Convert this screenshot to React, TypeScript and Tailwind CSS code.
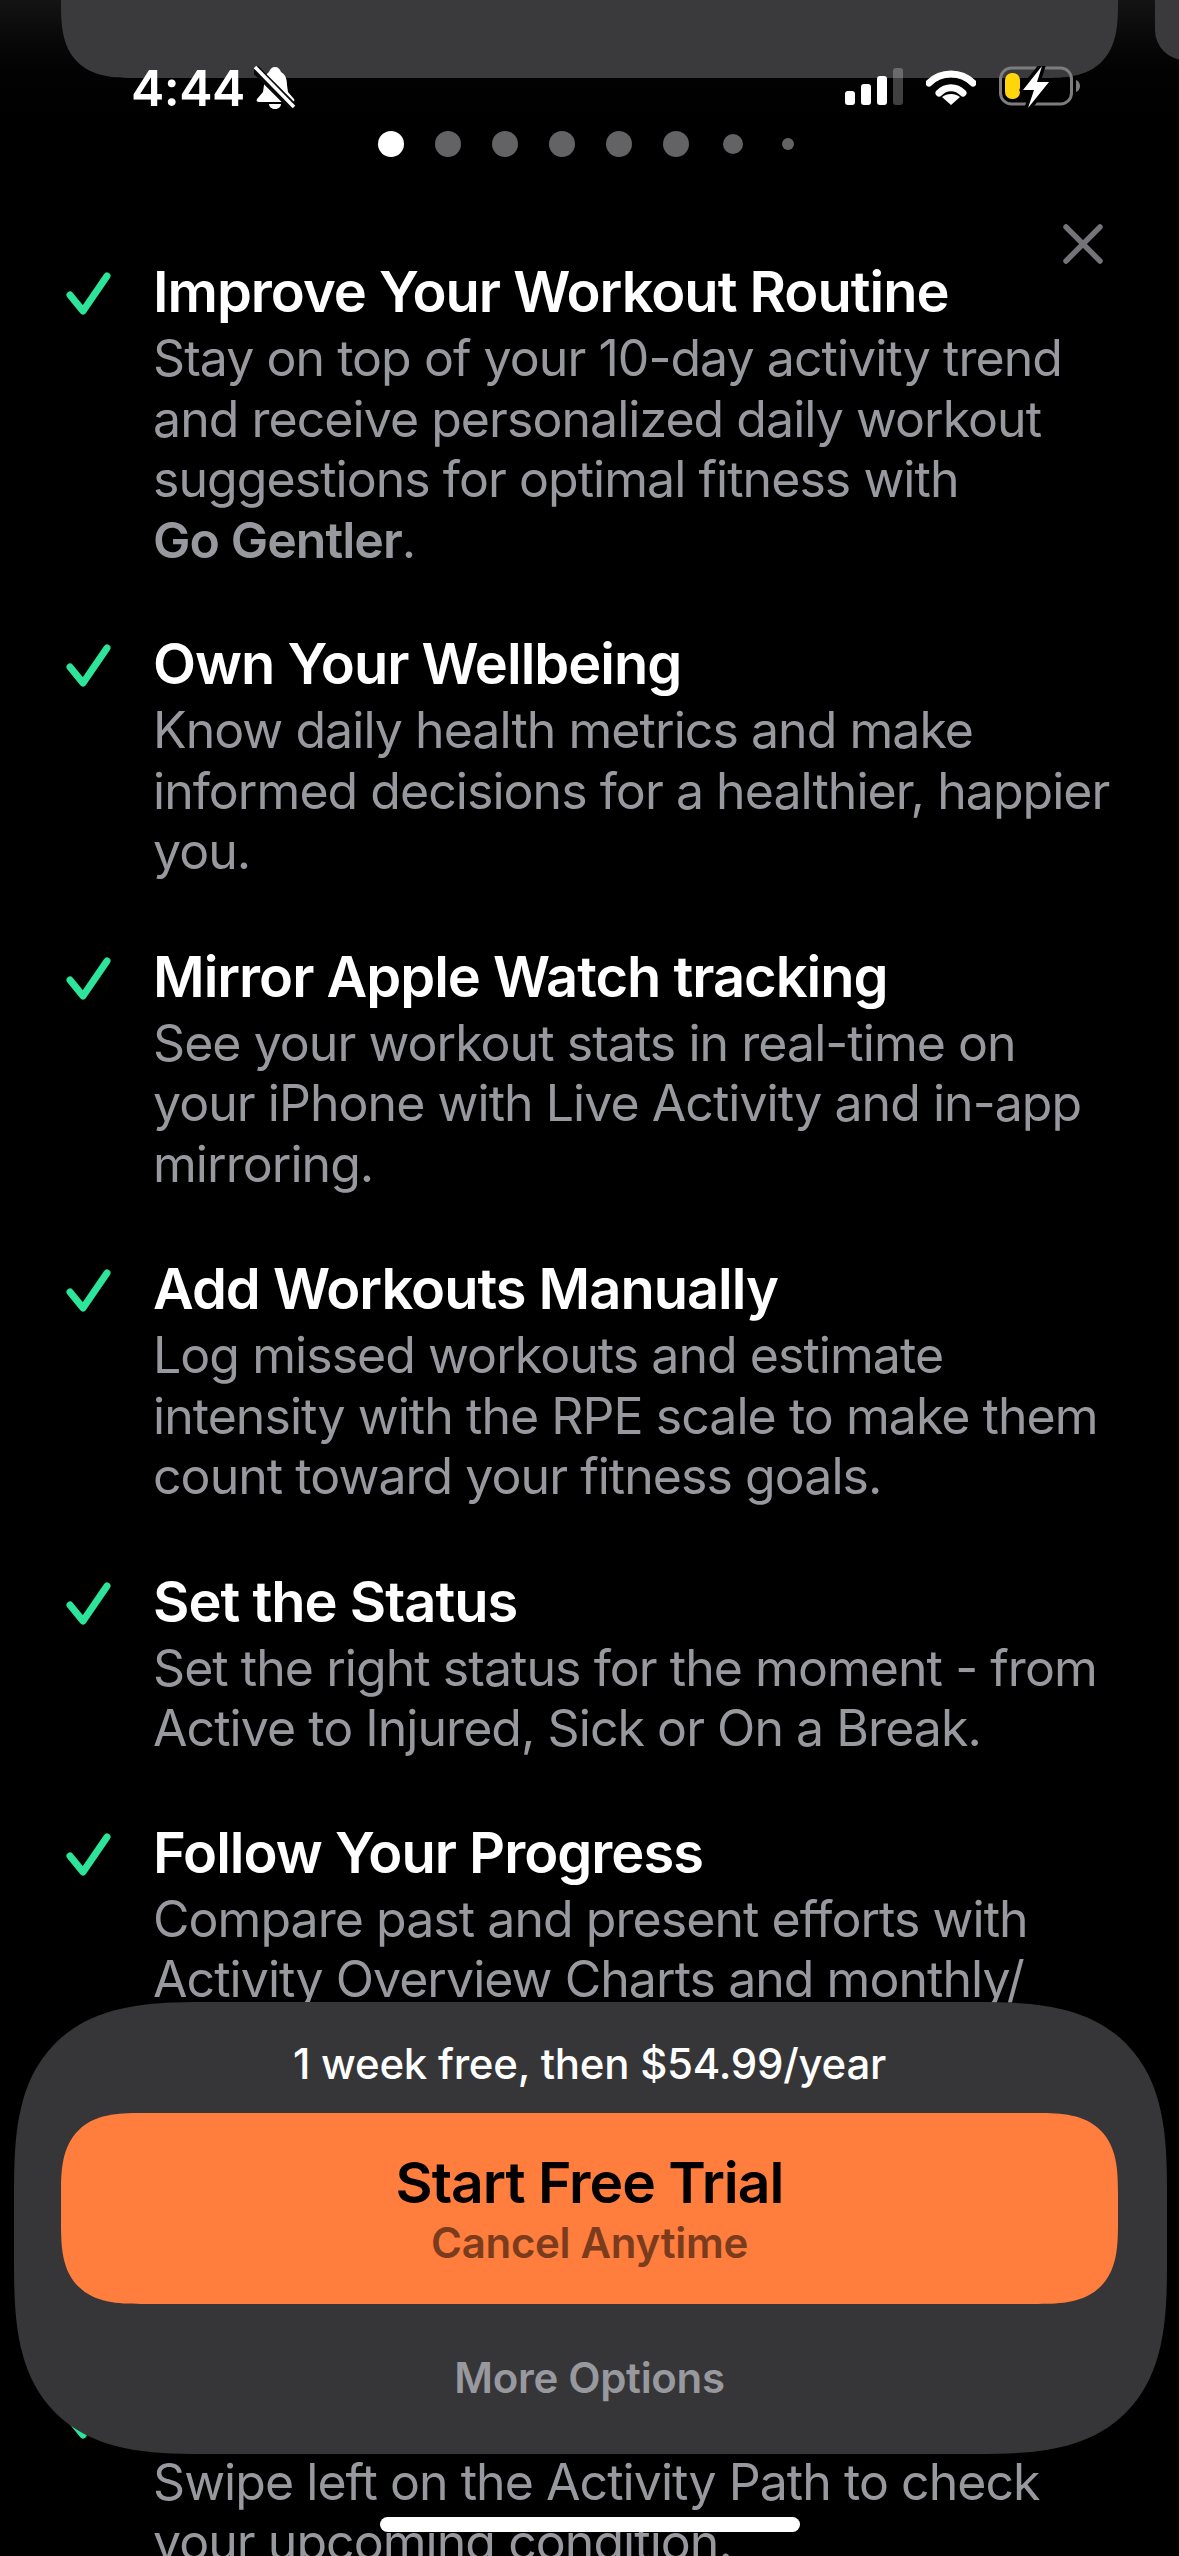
import React from "react";

const font = { fontFamily: "Inter, 'Noto Sans', sans-serif" };

function Check() {
  return (
    <svg width="48" height="48" viewBox="0 0 48 48" className="shrink-0" fill="none">
      <path d="M4 25 L17 41 L41 6" stroke="#2ce59b" strokeWidth="7" strokeLinecap="round" strokeLinejoin="round" />
    </svg>
  );
}

function Item({ title, children, className }: { title: string; children: React.ReactNode; className: string }) {
  return (
    <div className={`flex ${className}`}>
      <div className="w-[87px] pt-[12px] shrink-0">
        <Check />
      </div>
      <div className="flex-1 min-w-0">
        <div className="h-[70px] text-[56px] leading-[69px] font-semibold text-white tracking-[-1px] whitespace-nowrap">{title}</div>
        <div className="text-[50px] leading-[60.5px] font-normal text-[#98989f] tracking-[-0.95px] whitespace-nowrap">{children}</div>
      </div>
    </div>
  );
}

export default function App() {
  return (
    <div style={font} className="relative w-[1179px] h-[2556px] overflow-hidden bg-black">
      <div className="absolute inset-x-0 top-0 h-[140px] bg-gradient-to-b from-[#141415] to-black" />
      <div className="absolute left-[61px] top-[-80px] w-[1057px] h-[158px] rounded-[75px] [corner-shape:superellipse(1.5)] bg-[#3a3a3c]" />
      <div className="absolute left-[1155px] top-[-80px] w-[60px] h-[140px] rounded-[40px] bg-[#3a3a3c]" />

      <div className="relative flex items-start justify-between pl-[131px] pr-[98px] pt-[60px] h-[128px]">
        <div className="flex items-start">
          <span className="text-[50px] leading-[56px] font-semibold text-white tracking-[-0.5px]">4:44</span>
          <svg width="42" height="44" viewBox="0 0 42 44" className="ml-[9px] mt-[6px]">
            <path d="M21 1c3 0 5 2 6 5 5 3 6 8 6 13l1 7 6 7c1 2 0 3-2 3H5c-2 0-3-1-2-3l6-7 1-7c0-5 1-10 5-13 1-3 3-5 6-5z" fill="#fff" />
            <path d="M15 38h12c0 3-3 5-6 5s-6-2-6-5z" fill="#fff" />
            <path d="M1 3 L39 41" stroke="#0a0a0a" strokeWidth="9" />
            <path d="M1 1 L40 41" stroke="#fff" strokeWidth="3.5" />
          </svg>
        </div>
        <div className="flex items-start mt-[8px]">
          <svg width="58" height="38" viewBox="0 0 58 38">
            <rect x="0" y="23" width="10" height="14" rx="3" fill="#fff" />
            <rect x="16" y="16" width="10" height="21" rx="3" fill="#fff" />
            <rect x="32" y="8" width="10" height="29" rx="3" fill="#fff" />
            <rect x="48" y="0" width="10" height="37" rx="3" fill="#fff" fillOpacity="0.25" />
          </svg>
          <svg width="50" height="38" viewBox="0 0 50 38" className="ml-[23px]" fill="none">
            <path d="M3 15 C15 3 35 3 47 15" stroke="#fff" strokeWidth="7" strokeLinecap="round" />
            <path d="M13 25 C20 18 30 18 37 25" stroke="#fff" strokeWidth="7" strokeLinecap="round" />
            <path d="M25 37 L16 29 C21 25 29 25 34 29 Z" fill="#fff" />
          </svg>
          <svg width="82" height="42" viewBox="0 0 82 42" className="ml-[23px] mt-[-2px]" fill="none">
            <rect x="1.5" y="2" width="71" height="36" rx="11" stroke="#7d7d7f" strokeWidth="3" />
            <path d="M77 14 C80 15 81 18 81 20 C81 22 80 25 77 26 Z" fill="#7d7d7f" />
            <rect x="6" y="7" width="15" height="26" rx="7" fill="#ffd60a" />
            <path d="M43 0 L24 24 H35 L29 42 L50 16 H38 Z" fill="#000" stroke="#000" strokeWidth="7" strokeLinejoin="round" />
            <path d="M43 0 L24 24 H35 L29 42 L50 16 H38 Z" fill="#fff" />
          </svg>
        </div>
      </div>

      <div className="relative flex items-center h-[26px] mt-[3px] pl-[378px] gap-[31px]">
        <div className="w-[26px] h-[26px] rounded-full bg-white" />
        <div className="w-[26px] h-[26px] rounded-full bg-[#636366]" />
        <div className="w-[26px] h-[26px] rounded-full bg-[#636366]" />
        <div className="w-[26px] h-[26px] rounded-full bg-[#636366]" />
        <div className="w-[26px] h-[26px] rounded-full bg-[#636366]" />
        <div className="w-[26px] h-[26px] rounded-full bg-[#636366]" />
        <div className="w-[20px] h-[20px] rounded-full bg-[#636366] ml-[3px]" />
        <div className="w-[12px] h-[12px] rounded-full bg-[#636366] ml-[8px]" />
      </div>

      <div className="absolute left-[1063px] top-[224px]">
        <svg width="40" height="40" viewBox="0 0 40 40" fill="none">
          <path d="M3 3 L37 37 M37 3 L3 37" stroke="#737378" strokeWidth="5.5" strokeLinecap="round" />
        </svg>
      </div>

      <div className="relative pl-[66px] pt-[101px]">
        <Item title="Improve Your Workout Routine" className="mb-[60px]">
          Stay on top of your 10-day activity trend
          <br />
          and receive personalized daily workout
          <br />
          suggestions for optimal fitness with
          <br />
          <span className="font-semibold">Go Gentler</span>.
        </Item>
        <Item title="Own Your Wellbeing" className="mb-[61px]">
          Know daily health metrics and make
          <br />
          informed decisions for a healthier, happier
          <br />
          you.
        </Item>
        <Item title="Mirror Apple Watch tracking" className="mb-[61px]">
          See your workout stats in real-time on
          <br />
          your iPhone with Live Activity and in-app
          <br />
          mirroring.
        </Item>
        <Item title="Add Workouts Manually" className="mb-[61px]">
          Log missed workouts and estimate
          <br />
          intensity with the RPE scale to make them
          <br />
          count toward your fitness goals.
        </Item>
        <Item title="Set the Status" className="mb-[60px]">
          Set the right status for the moment - from
          <br />
          Active to Injured, Sick or On a Break.
        </Item>
        <Item title="Follow Your Progress" className="mb-[372px]">
          Compare past and present efforts with
          <br />
          Activity Overview Charts and monthly/
        </Item>
        <Item title="" className="">
          Swipe left on the Activity Path to check
          <br />
          your upcoming condition.
        </Item>
      </div>

      <div className="absolute left-[14px] top-[2002px] w-[1153px] h-[452px] rounded-[190px] [corner-shape:superellipse(1.5)] bg-[#363638] pl-[47px] pr-[49px] flex flex-col items-center">
        <div className="mt-[37px] text-[42px] leading-[50px] font-medium text-white tracking-[-0.25px]">1 week free, then $54.99/year</div>
        <div className="mt-[24px] w-full h-[191px] rounded-[80px] [corner-shape:superellipse(1.5)] bg-[#ff7d3d] flex flex-col items-center">
          <div className="mt-[37px] text-[57px] leading-[66px] font-semibold text-black tracking-[-1px]">Start Free Trial</div>
          <div className="mt-[2px] text-[42px] leading-[50px] font-semibold text-[#7a3c1d] tracking-[-0.3px]">Cancel Anytime</div>
        </div>
        <div className="mt-[49px] text-[42px] leading-[50px] font-semibold text-[#98989f] tracking-[-0.3px]">More Options</div>
      </div>

      <div className="absolute left-[380px] top-[2517px] w-[420px] h-[15px] rounded-full bg-white" />
    </div>
  );
}
